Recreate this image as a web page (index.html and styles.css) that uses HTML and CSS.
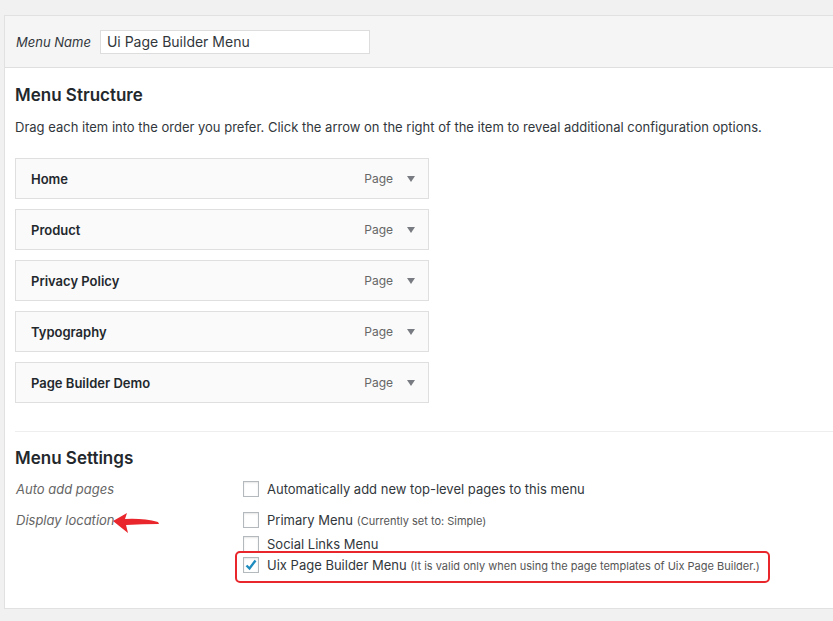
FILE: index.html
```html
<!DOCTYPE html>
<html>
<head>
<meta charset="utf-8">
<link rel="stylesheet" href="styles.css">
</head>
<body>
<div class="panel">
  <div class="header">
    <label class="name-label">Menu Name</label>
    <div class="name-input">Ui Page Builder Menu</div>
  </div>
  <div class="body">
    <h3 class="heading">Menu Structure</h3>
    <p class="desc">Drag each item into the order you prefer. Click the arrow on the right of the item to reveal additional configuration options.</p>
    <ul class="items">
      <li class="item"><span class="item-title">Home</span><span class="item-type">Page</span><span class="arrow"></span></li>
      <li class="item"><span class="item-title">Product</span><span class="item-type">Page</span><span class="arrow"></span></li>
      <li class="item"><span class="item-title">Privacy Policy</span><span class="item-type">Page</span><span class="arrow"></span></li>
      <li class="item"><span class="item-title">Typography</span><span class="item-type">Page</span><span class="arrow"></span></li>
      <li class="item"><span class="item-title">Page Builder Demo</span><span class="item-type">Page</span><span class="arrow"></span></li>
    </ul>
    <div class="settings">
      <h3 class="heading">Menu Settings</h3>
      <div class="row row-auto">
        <div class="row-label">Auto add pages</div>
        <div class="row-opts">
          <div class="opt"><span class="cb"></span><span>Automatically add new top-level pages to this menu</span></div>
        </div>
      </div>
      <div class="row row-loc">
        <div class="row-label loc">Display location
          <svg class="red-arrow" width="48" height="22" viewBox="0 0 48 22"><path d="M0 8 L14 0 L12 6 Q30 5 45 9 L46 11 Q30 11 13 12 L15 20 Z" fill="#e8262b"/></svg>
        </div>
        <div class="row-opts">
          <div class="opt"><span class="cb"></span><span>Primary Menu <small>(Currently set to: Simple)</small></span></div>
          <div class="opt opt-social"><span class="cb"></span><span>Social Links Menu</span></div>
          <div class="opt opt-hl"><span class="cb checked"><svg width="14" height="14" viewBox="0 0 14 14"><path d="M2.5 7.5 L5.5 10.5 L11.5 2.5" fill="none" stroke="#1e8cbe" stroke-width="2.4"/></svg></span><span>Uix Page Builder Menu <small>(It is valid only when using the page templates of Uix Page Builder.)</small></span></div>
        </div>
      </div>
    </div>
  </div>
</div>
</body>
</html>
```
FILE: styles.css
```css
* { box-sizing: border-box; }
html, body { margin: 0; padding: 0; }
body {
  background: #f1f1f1;
  font-family: Inter, "Liberation Sans", Arial, sans-serif;
  font-size: 13px;
  color: #23282d;
  width: 833px;
  height: 621px;
  overflow: hidden;
  padding-top: 15px;
  padding-left: 4px;
}
.panel {
  border: 1px solid #e1e1e1;
  border-right: none;
  width: 840px;
  background: #fff;
}
.header {
  background: #f5f5f5;
  border-bottom: 1px solid #dfdfdf;
  height: 52px;
  display: flex;
  align-items: center;
  padding-left: 11px;
}
.name-label {
  font-style: italic;
  color: #32373c;
  margin-right: 9px;
}
.name-input {
  width: 270px;
  height: 24px;
  border: 1px solid #ddd;
  background: #fff;
  font-size: 14px;
  line-height: 22px;
  padding-left: 6px;
  color: #32373c;
}
.body {
  padding: 0 0 0 10px;
  height: 540px;
}
.heading {
  margin: 0;
  font-size: 17px;
  font-weight: 600;
  color: #23282d;
  line-height: 22px;
}
.body > .heading { padding-top: 16px; }
.desc {
  margin: 12px 0 0 0;
  color: #32373c;
  font-size: 13px;
  line-height: 18px;
}
.items {
  list-style: none;
  margin: 22px 0 0 0;
  padding: 0;
  display: flex;
  flex-direction: column;
  gap: 10px;
  width: 414px;
}
.item {
  height: 41px;
  border: 1px solid #dfdfdf;
  background: #fafafa;
  display: flex;
  align-items: center;
  padding-left: 15px;
  font-weight: 600;
}
.item-title { flex: 1; color: #23282d; }
.item-type {
  font-weight: normal;
  color: #666;
  font-size: 12px;
  margin-right: 14px;
}
.arrow {
  width: 0; height: 0;
  border-left: 4px solid transparent;
  border-right: 4px solid transparent;
  border-top: 6px solid #787c82;
  margin-right: 13px;
}
.settings {
  margin-top: 28px;
  border-top: 1px solid #eee;
  padding-top: 15px;
}
.row { display: flex; }
.row-auto { margin-top: 12px; }
.row-label {
  width: 228px;
  font-style: italic;
  color: #666;
  padding-left: 1px;
  position: relative;
  line-height: 16px;
}
.red-arrow {
  position: absolute;
  left: 98px;
  top: 1px;
}
.row-opts {
  display: flex;
  flex-direction: column;
}
.row-loc { margin-top: 15px; }
.opt {
  display: flex;
  align-items: center;
  color: #32373c;
  height: 16px;
}
.opt-social { margin: 8px 0 5px; }
.opt small { font-size: 11px; color: #555; }
.cb {
  width: 16px;
  height: 16px;
  border: 1px solid #b4b9be;
  background: #fff;
  margin-right: 8px;
  display: flex;
  align-items: center;
  justify-content: center;
  box-shadow: inset 0 1px 2px rgba(0,0,0,0.1);
}
.opt-hl { position: relative; }
.opt-hl::after {
  content: "";
  position: absolute;
  left: -8px;
  top: -6px;
  width: 531px;
  height: 28px;
  border: 2px solid #e8262b;
  border-radius: 5px;
}
```
